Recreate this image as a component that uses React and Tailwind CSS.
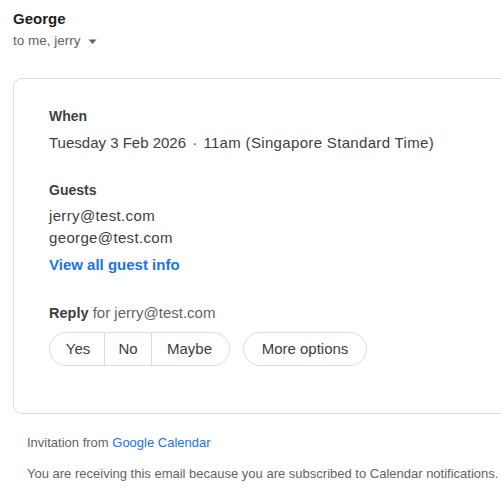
import React from "react";

const font = { fontFamily: "'Liberation Sans', Arial, sans-serif" };

const App = () => {
  return (
    <div className="w-[501px] h-[498px] overflow-hidden bg-white text-[#3c4043]" style={font}>
      {/* Sender */}
      <div className="pl-[13px] pt-[9px]">
        <div className="text-[15px] leading-[20px] font-bold text-[#202124]">George</div>
        <div className="flex items-center gap-[7px] mt-[2px] text-[13.5px] leading-[20px] text-[#5f6368]">
          <span>to me, jerry</span>
          <svg width="9" height="6" viewBox="0 0 9 6" className="mt-[1px]">
            <path d="M0.5 0.5h8L4.5 5z" fill="#5f6368" />
          </svg>
        </div>
      </div>

      {/* Invite card */}
      <div className="ml-[13px] mt-[27px] w-[520px] border border-[#dadce0] rounded-[9px] pl-[35px] pt-[27px] pb-[47px]">
        <div className="text-[14px] leading-[20px] font-bold">When</div>
        <div className="mt-[6px] text-[15px] leading-[22px] whitespace-nowrap">
          Tuesday 3 Feb 2026 <span className="mx-[2px]">·</span>{" "}
          <span className="tracking-[0.33px]">11am (Singapore Standard Time)</span>
        </div>

        <div className="mt-[26px] text-[14px] leading-[20px] font-bold">Guests</div>
        <div className="mt-[5px] text-[15px] leading-[22px] tracking-[0.35px]">
          <div>jerry@test.com</div>
          <div>george@test.com</div>
        </div>
        <div className="mt-[5px] text-[15px] leading-[22px] font-bold text-[#1a73e8]">View all guest info</div>

        <div className="mt-[27px] text-[15px] leading-[20px]">
          <span className="font-bold text-[14.5px]">Reply</span>
          <span className="text-[#5f6368]"> for jerry@test.com</span>
        </div>
        <div className="mt-[9px] flex items-center gap-[13px]">
          <div className="flex h-[34px] border border-[#dadce0] rounded-full text-[15px]">
            <button className="w-[55px] pl-[2px] border-r border-[#dadce0]">Yes</button>
            <button className="w-[47px] border-r border-[#dadce0]">No</button>
            <button className="w-[77px] pr-[2px]">Maybe</button>
          </div>
          <button className="h-[34px] w-[124px] border border-[#dadce0] rounded-full text-[15px]">More options</button>
        </div>
      </div>

      {/* Footer */}
      <div className="pl-[27px] text-[13px] leading-[16px] text-[#5f6368]">
        <div className="mt-[21px]">
          Invitation from <span className="text-[#1a73e8]">Google Calendar</span>
        </div>
        <div className="mt-[15px] whitespace-nowrap">
          You are receiving this email because you are subscribed to Calendar notifications.
        </div>
      </div>
    </div>
  );
};

export default App;
